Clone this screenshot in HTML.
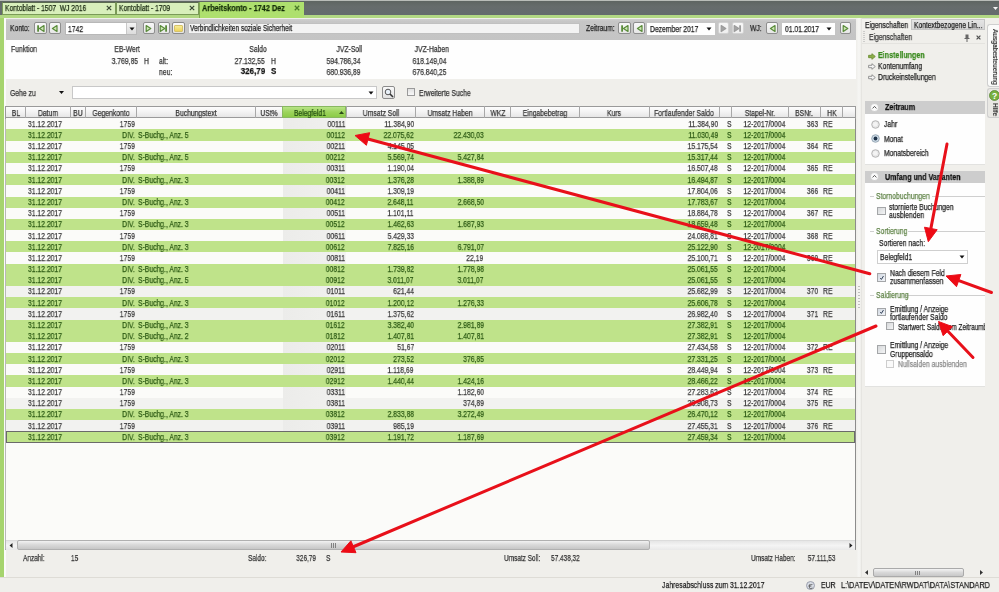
<!DOCTYPE html><html><head><meta charset="utf-8"><style>
*{margin:0;padding:0;box-sizing:border-box}
html,body{width:999px;height:592px;overflow:hidden;background:#f0efeb;font-family:"Liberation Sans",sans-serif;position:relative}
.r{position:absolute}
.t{position:absolute;white-space:nowrap;line-height:12px;transform:scaleX(0.8);transform-origin:0 0;-webkit-text-stroke:0.25px currentColor;will-change:transform}
.tr{transform-origin:100% 0;text-align:right}
.tc{transform-origin:50% 0;text-align:center}
</style></head><body><div style="position:absolute;left:0;top:0;width:999px;height:592px;overflow:hidden;filter:blur(0.3px)">
<div class="r" style="left:0.00px;top:0.00px;width:999.00px;height:1.30px;background:#b9bdb9"></div>
<div class="r" style="left:0.00px;top:1.30px;width:999.00px;height:13.30px;background:linear-gradient(#5e6562,#666c6c 40%,#646b6e)"></div>
<div class="r" style="left:0.00px;top:14.60px;width:999.00px;height:3.60px;background:#b2d884"></div>
<div class="r" style="left:0.00px;top:18.20px;width:999.00px;height:1.00px;background:#f2f8e8"></div>
<svg class="r" style="left:992.5px;top:6.5px" width="5" height="3" viewBox="0 0 5 3"><path d="M0 0 L5 0 L2.5 3Z" fill="#f4f4f4"/></svg>
<div class="r" style="left:1.50px;top:1.60px;width:114.00px;height:13.20px;background:#d8efbb;border:1px solid #7a9a58;border-top-color:#5a6a50"></div>
<div class="t" style="left:4.50px;top:3.37px;font-size:8.18125px;color:#1a2a12;transform:scaleX(0.82);">Kontoblatt - 1507&nbsp; WJ 2016</div>
<svg class="r" style="left:105.80px;top:5.30px" width="6" height="6" viewBox="0 0 6 6"><path d="M0.8 0.8 L5.2 5.2 M5.2 0.8 L0.8 5.2" stroke="#3a4a34" stroke-width="1.2"/></svg>
<div class="r" style="left:116.00px;top:1.60px;width:82.50px;height:13.20px;background:#d8efbb;border:1px solid #7a9a58;border-top-color:#5a6a50"></div>
<div class="t" style="left:119.00px;top:3.37px;font-size:8.18125px;color:#1a2a12;transform:scaleX(0.82);">Kontoblatt - 1709</div>
<svg class="r" style="left:188.80px;top:5.30px" width="6" height="6" viewBox="0 0 6 6"><path d="M0.8 0.8 L5.2 5.2 M5.2 0.8 L0.8 5.2" stroke="#3a4a34" stroke-width="1.2"/></svg>
<div class="r" style="left:198.50px;top:1.60px;width:105.00px;height:16.60px;background:#aee06e;border-left:1px solid #7ea850"></div>
<div class="t" style="left:202.00px;top:2.28px;font-size:8.712499999999999px;color:#142e08;font-weight:bold;transform:scaleX(0.84);">Arbeitskonto - 1742 Dez</div>
<svg class="r" style="left:293.50px;top:5.30px" width="6" height="6" viewBox="0 0 6 6"><path d="M0.8 0.8 L5.2 5.2 M5.2 0.8 L0.8 5.2" stroke="#4a7a2a" stroke-width="1.3"/></svg>
<div class="r" style="left:0.00px;top:18.00px;width:4.00px;height:559.00px;background:#a6d46e"></div>
<div class="r" style="left:4.00px;top:18.20px;width:852.00px;height:558.80px;background:#f0efeb"></div>
<div class="r" style="left:4.00px;top:18.20px;width:1.50px;height:558.80px;background:#fbfbf9"></div>
<div class="r" style="left:5.50px;top:19.20px;width:850.50px;height:21.10px;background:linear-gradient(#cfcfcf,#c6c6c6 12%,#c4c4c4)"></div>
<div class="r" style="left:5.50px;top:40.30px;width:850.50px;height:38.70px;background:#fefefe"></div>
<div class="t" style="left:9.50px;top:22.25px;font-size:8.5px;color:#222;">Konto:</div>
<div class="r" style="left:33.50px;top:22.40px;width:13.00px;height:11.90px;background:linear-gradient(#f8f8f8,#e6e6e6);border:1px solid #8e8e8e;border-radius:2px"></div>
<svg class="r" style="left:35.50px;top:23.85px" width="9" height="9" viewBox="0 0 9 9"><rect x="1.2" y="1.3" width="1.8" height="6.4" fill="#5a8c3a"/><path d="M8 1.5 L3.4 4.5 L8 7.5Z" fill="#cfe6b8" stroke="#5a8c3a" stroke-width="1.2" stroke-linejoin="round"/></svg>
<div class="r" style="left:48.50px;top:22.40px;width:12.80px;height:11.90px;background:linear-gradient(#f8f8f8,#e6e6e6);border:1px solid #8e8e8e;border-radius:2px"></div>
<svg class="r" style="left:50.40px;top:23.85px" width="9" height="9" viewBox="0 0 9 9"><path d="M7 1.5 L2.4 4.5 L7 7.5Z" fill="#cfe6b8" stroke="#5a8c3a" stroke-width="1.2" stroke-linejoin="round"/></svg>
<div class="r" style="left:64.60px;top:22.30px;width:72.90px;height:12.50px;background:#fff;border:1px solid #b8b8b8"></div>
<div class="t" style="left:68.10px;top:22.50px;font-size:8.5px;color:#222;">1742</div>
<div class="r" style="left:126.20px;top:23.30px;width:10.30px;height:10.50px;background:linear-gradient(#f4f4f4,#dcdcdc);border-left:1px solid #c8c8c8"></div>
<svg class="r" style="left:128.5px;top:27px" width="6" height="4" viewBox="0 0 6 4"><path d="M0.5 0.5 L5.5 0.5 L3 3.5Z" fill="#111"/></svg>
<div class="r" style="left:142.50px;top:22.40px;width:12.50px;height:11.90px;background:linear-gradient(#f8f8f8,#e6e6e6);border:1px solid #8e8e8e;border-radius:2px"></div>
<svg class="r" style="left:144.25px;top:23.85px" width="9" height="9" viewBox="0 0 9 9"><path d="M2.2 1.5 L6.8 4.5 L2.2 7.5Z" fill="#cfe6b8" stroke="#5a8c3a" stroke-width="1.2" stroke-linejoin="round"/></svg>
<div class="r" style="left:157.50px;top:22.40px;width:12.50px;height:11.90px;background:linear-gradient(#f8f8f8,#e6e6e6);border:1px solid #8e8e8e;border-radius:2px"></div>
<svg class="r" style="left:159.25px;top:23.85px" width="9" height="9" viewBox="0 0 9 9"><path d="M1.2 1.5 L5.8 4.5 L1.2 7.5Z" fill="#cfe6b8" stroke="#5a8c3a" stroke-width="1.2" stroke-linejoin="round"/><rect x="6.2" y="1.3" width="1.8" height="6.4" fill="#5a8c3a"/></svg>
<div class="r" style="left:172.00px;top:22.30px;width:12.60px;height:12.20px;background:linear-gradient(#fbfbfb,#e4e4e4);border:1px solid #8a8a8a;border-radius:2px"></div>
<div class="r" style="left:174.00px;top:24.60px;width:8.80px;height:7.80px;background:linear-gradient(#f6ec98,#eed45a);border:1px solid #d6c26a;border-radius:1px"></div>
<div class="r" style="left:188.00px;top:22.80px;width:391.80px;height:11.40px;background:#fff;border:1px solid #c0c0c0"></div>
<div class="t" style="left:190.50px;top:22.45px;font-size:8.5px;color:#222;">Verbindlichkeiten soziale Sicherheit</div>
<div class="r" style="left:189.00px;top:23.80px;width:389.80px;height:9.40px;background:#f3f3f3"></div>
<div class="t" style="left:190.00px;top:22.45px;font-size:8.5px;color:#222;transform:scaleX(0.765);">Verbindlichkeiten soziale Sicherheit</div>
<div class="t" style="left:585.80px;top:22.25px;font-size:8.5px;color:#222;">Zeitraum:</div>
<div class="r" style="left:618.30px;top:22.40px;width:12.60px;height:11.90px;background:linear-gradient(#f8f8f8,#e6e6e6);border:1px solid #8e8e8e;border-radius:2px"></div>
<svg class="r" style="left:620.10px;top:23.85px" width="9" height="9" viewBox="0 0 9 9"><rect x="1.2" y="1.3" width="1.8" height="6.4" fill="#5a8c3a"/><path d="M8 1.5 L3.4 4.5 L8 7.5Z" fill="#cfe6b8" stroke="#5a8c3a" stroke-width="1.2" stroke-linejoin="round"/></svg>
<div class="r" style="left:633.30px;top:22.40px;width:12.20px;height:11.90px;background:linear-gradient(#f8f8f8,#e6e6e6);border:1px solid #8e8e8e;border-radius:2px"></div>
<svg class="r" style="left:634.90px;top:23.85px" width="9" height="9" viewBox="0 0 9 9"><path d="M7 1.5 L2.4 4.5 L7 7.5Z" fill="#cfe6b8" stroke="#5a8c3a" stroke-width="1.2" stroke-linejoin="round"/></svg>
<div class="r" style="left:647.10px;top:23.00px;width:68.30px;height:11.80px;background:#fff;border:1px solid #ffffff"></div>
<div class="t" style="left:650.10px;top:22.85px;font-size:8.5px;color:#222;">Dezember 2017</div>
<svg class="r" style="left:706.40px;top:27.40px" width="6" height="4" viewBox="0 0 6 4"><path d="M0.5 0.5 L5.5 0.5 L3 3.5Z" fill="#111"/></svg>
<div class="r" style="left:717.80px;top:22.40px;width:11.40px;height:11.90px;background:linear-gradient(#f7f7f7,#efefef);border:1px solid #d2d2d2;border-radius:2px"></div>
<svg class="r" style="left:719.00px;top:23.85px" width="9" height="9" viewBox="0 0 9 9"><path d="M2.2 1.5 L6.8 4.5 L2.2 7.5Z" fill="#a4a4a4" stroke="#9c9c9c" stroke-width="1.2" stroke-linejoin="round"/></svg>
<div class="r" style="left:731.60px;top:22.40px;width:12.10px;height:11.90px;background:linear-gradient(#f7f7f7,#efefef);border:1px solid #d2d2d2;border-radius:2px"></div>
<svg class="r" style="left:733.15px;top:23.85px" width="9" height="9" viewBox="0 0 9 9"><path d="M1.2 1.5 L5.8 4.5 L1.2 7.5Z" fill="#a4a4a4" stroke="#9c9c9c" stroke-width="1.2" stroke-linejoin="round"/><rect x="6.2" y="1.3" width="1.8" height="6.4" fill="#9c9c9c"/></svg>
<div class="t" style="left:750.30px;top:22.25px;font-size:8.5px;color:#222;">WJ:</div>
<div class="r" style="left:765.90px;top:22.40px;width:12.60px;height:11.90px;background:linear-gradient(#f8f8f8,#e6e6e6);border:1px solid #8e8e8e;border-radius:2px"></div>
<svg class="r" style="left:767.70px;top:23.85px" width="9" height="9" viewBox="0 0 9 9"><path d="M7 1.5 L2.4 4.5 L7 7.5Z" fill="#cfe6b8" stroke="#5a8c3a" stroke-width="1.2" stroke-linejoin="round"/></svg>
<div class="r" style="left:782.00px;top:22.80px;width:53.00px;height:11.80px;background:#fff;border:1px solid #ffffff"></div>
<div class="t" style="left:784.80px;top:22.65px;font-size:8.5px;color:#222;">01.01.2017</div>
<svg class="r" style="left:826.00px;top:27.20px" width="6" height="4" viewBox="0 0 6 4"><path d="M0.5 0.5 L5.5 0.5 L3 3.5Z" fill="#111"/></svg>
<div class="r" style="left:839.60px;top:22.40px;width:11.40px;height:11.90px;background:linear-gradient(#f8f8f8,#e6e6e6);border:1px solid #8e8e8e;border-radius:2px"></div>
<svg class="r" style="left:840.80px;top:23.85px" width="9" height="9" viewBox="0 0 9 9"><path d="M2.2 1.5 L6.8 4.5 L2.2 7.5Z" fill="#cfe6b8" stroke="#5a8c3a" stroke-width="1.2" stroke-linejoin="round"/></svg>
<div class="t" style="left:10.50px;top:42.65px;font-size:8.5px;color:#333;">Funktion</div>
<div class="t tr" style="right:859.40px;top:42.65px;font-size:8.5px;color:#333;">EB-Wert</div>
<div class="t tr" style="right:861.20px;top:54.95px;font-size:8.5px;color:#333;">3.769,85</div>
<div class="t" style="left:144.40px;top:54.95px;font-size:8.5px;color:#333;">H</div>
<div class="t" style="left:158.80px;top:54.95px;font-size:8.5px;color:#333;">alt:</div>
<div class="t" style="left:158.80px;top:65.85px;font-size:8.5px;color:#333;">neu:</div>
<div class="t tr" style="right:732.10px;top:42.65px;font-size:8.5px;color:#333;">Saldo</div>
<div class="t tr" style="right:734.10px;top:54.95px;font-size:8.5px;color:#333;">27.132,55</div>
<div class="t" style="left:270.60px;top:54.95px;font-size:8.5px;color:#333;">H</div>
<div class="t tr" style="right:734.10px;top:65.49px;font-size:9.5625px;color:#111;font-weight:bold;transform:scaleX(0.84);">326,79</div>
<div class="t" style="left:270.60px;top:65.49px;font-size:9.5625px;color:#111;font-weight:bold;transform:scaleX(0.84);">S</div>
<div class="t tr" style="right:636.70px;top:42.65px;font-size:8.5px;color:#333;">JVZ-Soll</div>
<div class="t tr" style="right:638.90px;top:54.95px;font-size:8.5px;color:#333;">594.786,34</div>
<div class="t tr" style="right:638.90px;top:65.85px;font-size:8.5px;color:#333;">680.936,89</div>
<div class="t tr" style="right:549.90px;top:42.65px;font-size:8.5px;color:#333;">JVZ-Haben</div>
<div class="t tr" style="right:552.10px;top:54.95px;font-size:8.5px;color:#333;">618.149,04</div>
<div class="t tr" style="right:552.10px;top:65.85px;font-size:8.5px;color:#333;">676.840,25</div>
<div class="t" style="left:9.60px;top:87.05px;font-size:8.5px;color:#333;">Gehe zu</div>
<svg class="r" style="left:58.5px;top:91.3px" width="5" height="3" viewBox="0 0 5 3"><path d="M0 0 L5 0 L2.5 3Z" fill="#111"/></svg>
<div class="r" style="left:72.00px;top:85.80px;width:305.20px;height:12.80px;background:#fff;border:1px solid #c8c8c8"></div>
<svg class="r" style="left:368.20px;top:90.70px" width="6" height="4" viewBox="0 0 6 4"><path d="M0.5 0.5 L5.5 0.5 L3 3.5Z" fill="#111"/></svg>
<div class="r" style="left:382.00px;top:86.00px;width:13.30px;height:12.80px;background:linear-gradient(#fafafa,#e2e2e2);border:1px solid #8c8c8c;border-radius:2px"></div>
<svg class="r" style="left:384px;top:88px" width="10" height="10" viewBox="0 0 10 10"><circle cx="4" cy="4" r="2.8" fill="#e8f0f8" stroke="#555" stroke-width="1"/><path d="M6 6 L9 9" stroke="#333" stroke-width="1.6"/></svg>
<div class="r" style="left:407.30px;top:88.40px;width:8.00px;height:8.00px;background:linear-gradient(#e0e0e0,#f8f8f8);border:1px solid #9a9a9a"></div>
<div class="t" style="left:418.50px;top:87.05px;font-size:8.5px;color:#333;">Erweiterte Suche</div>
<div class="r" style="left:5.30px;top:106.00px;width:850.70px;height:444.40px;background:#fbfbf9;border:1px solid #b8b8b8;border-right-color:#8c8c8c;border-bottom-color:#a0a0a0"></div>
<div class="r" style="left:5.30px;top:106.00px;width:850.70px;height:12.30px;background:linear-gradient(#fdfdfd,#f3f3f3 50%,#e6e6e6);border:1px solid #9a9a9a"></div>
<div class="t tc" style="left:-84.40px;width:200px;top:106.85px;font-size:8.5px;color:#333;">BL</div>
<div class="r" style="left:25.00px;top:106.00px;width:1.00px;height:12.30px;background:#a8a8a8"></div>
<div class="t tc" style="left:-51.95px;width:200px;top:106.85px;font-size:8.5px;color:#333;">Datum</div>
<div class="r" style="left:70.10px;top:106.00px;width:1.00px;height:12.30px;background:#a8a8a8"></div>
<div class="t tc" style="left:-22.05px;width:200px;top:106.85px;font-size:8.5px;color:#333;">BU</div>
<div class="r" style="left:84.80px;top:106.00px;width:1.00px;height:12.30px;background:#a8a8a8"></div>
<div class="t tc" style="left:10.90px;width:200px;top:106.85px;font-size:8.5px;color:#333;">Gegenkonto</div>
<div class="r" style="left:136.00px;top:106.00px;width:1.00px;height:12.30px;background:#a8a8a8"></div>
<div class="t tc" style="left:96.00px;width:200px;top:106.85px;font-size:8.5px;color:#333;">Buchungstext</div>
<div class="r" style="left:255.00px;top:106.00px;width:1.00px;height:12.30px;background:#a8a8a8"></div>
<div class="t tc" style="left:168.90px;width:200px;top:106.85px;font-size:8.5px;color:#333;">USt%</div>
<div class="r" style="left:282.30px;top:106.00px;width:63.80px;height:12.30px;background:linear-gradient(#b8e486,#9cd45c 50%,#8ccb48);border:1px solid #88b860"></div>
<div class="t tc" style="left:210.20px;width:200px;top:106.85px;font-size:8.5px;color:#1f4a10;-webkit-text-stroke:0.2px #1f4a10;">Belegfeld1</div>
<svg class="r" style="left:338.5px;top:110.8px" width="5" height="3" viewBox="0 0 5 3"><path d="M0 3 L5 3 L2.5 0Z" fill="#2a4a18"/></svg>
<div class="r" style="left:345.60px;top:106.00px;width:1.00px;height:12.30px;background:#a8a8a8"></div>
<div class="t tc" style="left:280.70px;width:200px;top:106.85px;font-size:8.5px;color:#333;">Umsatz Soll</div>
<div class="r" style="left:414.80px;top:106.00px;width:1.00px;height:12.30px;background:#a8a8a8"></div>
<div class="t tc" style="left:350.00px;width:200px;top:106.85px;font-size:8.5px;color:#333;">Umsatz Haben</div>
<div class="r" style="left:484.20px;top:106.00px;width:1.00px;height:12.30px;background:#a8a8a8"></div>
<div class="t tc" style="left:397.55px;width:200px;top:106.85px;font-size:8.5px;color:#333;">WKZ</div>
<div class="r" style="left:509.90px;top:106.00px;width:1.00px;height:12.30px;background:#a8a8a8"></div>
<div class="t tc" style="left:444.85px;width:200px;top:106.85px;font-size:8.5px;color:#333;">Eingabebetrag</div>
<div class="r" style="left:578.80px;top:106.00px;width:1.00px;height:12.30px;background:#a8a8a8"></div>
<div class="t tc" style="left:514.45px;width:200px;top:106.85px;font-size:8.5px;color:#333;">Kurs</div>
<div class="r" style="left:649.10px;top:106.00px;width:1.00px;height:12.30px;background:#a8a8a8"></div>
<div class="t tc" style="left:584.45px;width:200px;top:106.85px;font-size:8.5px;color:#333;">Fortlaufender Saldo</div>
<div class="r" style="left:718.80px;top:106.00px;width:1.00px;height:12.30px;background:#a8a8a8"></div>
<div class="r" style="left:731.00px;top:106.00px;width:1.00px;height:12.30px;background:#a8a8a8"></div>
<div class="t tc" style="left:659.80px;width:200px;top:106.85px;font-size:8.5px;color:#333;">Stapel-Nr.</div>
<div class="r" style="left:787.60px;top:106.00px;width:1.00px;height:12.30px;background:#a8a8a8"></div>
<div class="t tc" style="left:704.40px;width:200px;top:106.85px;font-size:8.5px;color:#333;">BSNr.</div>
<div class="r" style="left:820.20px;top:106.00px;width:1.00px;height:12.30px;background:#a8a8a8"></div>
<div class="t tc" style="left:731.65px;width:200px;top:106.85px;font-size:8.5px;color:#333;">HK</div>
<div class="r" style="left:842.10px;top:106.00px;width:1.00px;height:12.30px;background:#a8a8a8"></div>
<div class="r" style="left:5.30px;top:117.70px;width:850.70px;height:1.00px;background:#9a9a9a"></div>
<div class="r" style="left:5.80px;top:118.30px;width:849.70px;height:11.18px;background:#fbfbf9"></div>
<div class="r" style="left:282.50px;top:118.30px;width:63.50px;height:11.18px;background:linear-gradient(90deg,#ececea,#efefed 60%,#f3f3f1)"></div>
<div class="t" style="left:27.80px;top:117.75px;font-size:8.5px;color:#3a3a3a;">31.12.2017</div>
<div class="t tr" style="right:863.80px;top:117.75px;font-size:8.5px;color:#3a3a3a;">1759</div>
<div class="t tr" style="right:654.00px;top:117.75px;font-size:8.5px;color:#3a3a3a;">00111</div>
<div class="t tr" style="right:585.20px;top:117.75px;font-size:8.5px;color:#3a3a3a;">11.384,90</div>
<div class="t tr" style="right:281.20px;top:117.75px;font-size:8.5px;color:#3a3a3a;">11.384,90</div>
<div class="t" style="left:726.50px;top:117.75px;font-size:8.5px;color:#3a3a3a;">S</div>
<div class="t tr" style="right:213.20px;top:117.75px;font-size:8.5px;color:#3a3a3a;">12-2017/0004</div>
<div class="t tr" style="right:180.80px;top:117.75px;font-size:8.5px;color:#3a3a3a;">363</div>
<div class="t" style="left:822.50px;top:117.75px;font-size:8.5px;color:#3a3a3a;">RE</div>
<div class="r" style="left:5.80px;top:129.48px;width:849.70px;height:11.18px;background:#bfe38a"></div>
<div class="t" style="left:27.80px;top:128.93px;font-size:8.5px;color:#2c5a14;">31.12.2017</div>
<div class="t tr" style="right:863.80px;top:128.93px;font-size:8.5px;color:#2c5a14;">DIV.</div>
<div class="t" style="left:138.30px;top:128.93px;font-size:8.5px;color:#2c5a14;">S-Buchg., Anz. 5</div>
<div class="t tr" style="right:654.00px;top:128.93px;font-size:8.5px;color:#2c5a14;">00112</div>
<div class="t tr" style="right:585.20px;top:128.93px;font-size:8.5px;color:#2c5a14;">22.075,62</div>
<div class="t tr" style="right:515.30px;top:128.93px;font-size:8.5px;color:#2c5a14;">22.430,03</div>
<div class="t tr" style="right:281.20px;top:128.93px;font-size:8.5px;color:#2c5a14;">11.030,49</div>
<div class="t" style="left:726.50px;top:128.93px;font-size:8.5px;color:#2c5a14;">S</div>
<div class="t tr" style="right:213.20px;top:128.93px;font-size:8.5px;color:#2c5a14;">12-2017/0004</div>
<div class="r" style="left:5.80px;top:140.66px;width:849.70px;height:11.18px;background:#fbfbf9"></div>
<div class="r" style="left:282.50px;top:140.66px;width:63.50px;height:11.18px;background:linear-gradient(90deg,#ececea,#efefed 60%,#f3f3f1)"></div>
<div class="t" style="left:27.80px;top:140.11px;font-size:8.5px;color:#3a3a3a;">31.12.2017</div>
<div class="t tr" style="right:863.80px;top:140.11px;font-size:8.5px;color:#3a3a3a;">1759</div>
<div class="t tr" style="right:654.00px;top:140.11px;font-size:8.5px;color:#3a3a3a;">00211</div>
<div class="t tr" style="right:585.20px;top:140.11px;font-size:8.5px;color:#3a3a3a;">4.145,05</div>
<div class="t tr" style="right:281.20px;top:140.11px;font-size:8.5px;color:#3a3a3a;">15.175,54</div>
<div class="t" style="left:726.50px;top:140.11px;font-size:8.5px;color:#3a3a3a;">S</div>
<div class="t tr" style="right:213.20px;top:140.11px;font-size:8.5px;color:#3a3a3a;">12-2017/0004</div>
<div class="t tr" style="right:180.80px;top:140.11px;font-size:8.5px;color:#3a3a3a;">364</div>
<div class="t" style="left:822.50px;top:140.11px;font-size:8.5px;color:#3a3a3a;">RE</div>
<div class="r" style="left:5.80px;top:151.84px;width:849.70px;height:11.18px;background:#bfe38a"></div>
<div class="t" style="left:27.80px;top:151.29px;font-size:8.5px;color:#2c5a14;">31.12.2017</div>
<div class="t tr" style="right:863.80px;top:151.29px;font-size:8.5px;color:#2c5a14;">DIV.</div>
<div class="t" style="left:138.30px;top:151.29px;font-size:8.5px;color:#2c5a14;">S-Buchg., Anz. 5</div>
<div class="t tr" style="right:654.00px;top:151.29px;font-size:8.5px;color:#2c5a14;">00212</div>
<div class="t tr" style="right:585.20px;top:151.29px;font-size:8.5px;color:#2c5a14;">5.569,74</div>
<div class="t tr" style="right:515.30px;top:151.29px;font-size:8.5px;color:#2c5a14;">5.427,84</div>
<div class="t tr" style="right:281.20px;top:151.29px;font-size:8.5px;color:#2c5a14;">15.317,44</div>
<div class="t" style="left:726.50px;top:151.29px;font-size:8.5px;color:#2c5a14;">S</div>
<div class="t tr" style="right:213.20px;top:151.29px;font-size:8.5px;color:#2c5a14;">12-2017/0004</div>
<div class="r" style="left:5.80px;top:163.02px;width:849.70px;height:11.18px;background:#fbfbf9"></div>
<div class="r" style="left:282.50px;top:163.02px;width:63.50px;height:11.18px;background:linear-gradient(90deg,#ececea,#efefed 60%,#f3f3f1)"></div>
<div class="t" style="left:27.80px;top:162.47px;font-size:8.5px;color:#3a3a3a;">31.12.2017</div>
<div class="t tr" style="right:863.80px;top:162.47px;font-size:8.5px;color:#3a3a3a;">1759</div>
<div class="t tr" style="right:654.00px;top:162.47px;font-size:8.5px;color:#3a3a3a;">00311</div>
<div class="t tr" style="right:585.20px;top:162.47px;font-size:8.5px;color:#3a3a3a;">1.190,04</div>
<div class="t tr" style="right:281.20px;top:162.47px;font-size:8.5px;color:#3a3a3a;">16.507,48</div>
<div class="t" style="left:726.50px;top:162.47px;font-size:8.5px;color:#3a3a3a;">S</div>
<div class="t tr" style="right:213.20px;top:162.47px;font-size:8.5px;color:#3a3a3a;">12-2017/0004</div>
<div class="t tr" style="right:180.80px;top:162.47px;font-size:8.5px;color:#3a3a3a;">365</div>
<div class="t" style="left:822.50px;top:162.47px;font-size:8.5px;color:#3a3a3a;">RE</div>
<div class="r" style="left:5.80px;top:174.20px;width:849.70px;height:11.18px;background:#bfe38a"></div>
<div class="t" style="left:27.80px;top:173.65px;font-size:8.5px;color:#2c5a14;">31.12.2017</div>
<div class="t tr" style="right:863.80px;top:173.65px;font-size:8.5px;color:#2c5a14;">DIV.</div>
<div class="t" style="left:138.30px;top:173.65px;font-size:8.5px;color:#2c5a14;">S-Buchg., Anz. 3</div>
<div class="t tr" style="right:654.00px;top:173.65px;font-size:8.5px;color:#2c5a14;">00312</div>
<div class="t tr" style="right:585.20px;top:173.65px;font-size:8.5px;color:#2c5a14;">1.376,28</div>
<div class="t tr" style="right:515.30px;top:173.65px;font-size:8.5px;color:#2c5a14;">1.388,89</div>
<div class="t tr" style="right:281.20px;top:173.65px;font-size:8.5px;color:#2c5a14;">16.494,87</div>
<div class="t" style="left:726.50px;top:173.65px;font-size:8.5px;color:#2c5a14;">S</div>
<div class="t tr" style="right:213.20px;top:173.65px;font-size:8.5px;color:#2c5a14;">12-2017/0004</div>
<div class="r" style="left:5.80px;top:185.38px;width:849.70px;height:11.18px;background:#fbfbf9"></div>
<div class="r" style="left:282.50px;top:185.38px;width:63.50px;height:11.18px;background:linear-gradient(90deg,#ececea,#efefed 60%,#f3f3f1)"></div>
<div class="t" style="left:27.80px;top:184.83px;font-size:8.5px;color:#3a3a3a;">31.12.2017</div>
<div class="t tr" style="right:863.80px;top:184.83px;font-size:8.5px;color:#3a3a3a;">1759</div>
<div class="t tr" style="right:654.00px;top:184.83px;font-size:8.5px;color:#3a3a3a;">00411</div>
<div class="t tr" style="right:585.20px;top:184.83px;font-size:8.5px;color:#3a3a3a;">1.309,19</div>
<div class="t tr" style="right:281.20px;top:184.83px;font-size:8.5px;color:#3a3a3a;">17.804,06</div>
<div class="t" style="left:726.50px;top:184.83px;font-size:8.5px;color:#3a3a3a;">S</div>
<div class="t tr" style="right:213.20px;top:184.83px;font-size:8.5px;color:#3a3a3a;">12-2017/0004</div>
<div class="t tr" style="right:180.80px;top:184.83px;font-size:8.5px;color:#3a3a3a;">366</div>
<div class="t" style="left:822.50px;top:184.83px;font-size:8.5px;color:#3a3a3a;">RE</div>
<div class="r" style="left:5.80px;top:196.56px;width:849.70px;height:11.18px;background:#bfe38a"></div>
<div class="t" style="left:27.80px;top:196.01px;font-size:8.5px;color:#2c5a14;">31.12.2017</div>
<div class="t tr" style="right:863.80px;top:196.01px;font-size:8.5px;color:#2c5a14;">DIV.</div>
<div class="t" style="left:138.30px;top:196.01px;font-size:8.5px;color:#2c5a14;">S-Buchg., Anz. 3</div>
<div class="t tr" style="right:654.00px;top:196.01px;font-size:8.5px;color:#2c5a14;">00412</div>
<div class="t tr" style="right:585.20px;top:196.01px;font-size:8.5px;color:#2c5a14;">2.648,11</div>
<div class="t tr" style="right:515.30px;top:196.01px;font-size:8.5px;color:#2c5a14;">2.668,50</div>
<div class="t tr" style="right:281.20px;top:196.01px;font-size:8.5px;color:#2c5a14;">17.783,67</div>
<div class="t" style="left:726.50px;top:196.01px;font-size:8.5px;color:#2c5a14;">S</div>
<div class="t tr" style="right:213.20px;top:196.01px;font-size:8.5px;color:#2c5a14;">12-2017/0004</div>
<div class="r" style="left:5.80px;top:207.74px;width:849.70px;height:11.18px;background:#fbfbf9"></div>
<div class="r" style="left:282.50px;top:207.74px;width:63.50px;height:11.18px;background:linear-gradient(90deg,#ececea,#efefed 60%,#f3f3f1)"></div>
<div class="t" style="left:27.80px;top:207.19px;font-size:8.5px;color:#3a3a3a;">31.12.2017</div>
<div class="t tr" style="right:863.80px;top:207.19px;font-size:8.5px;color:#3a3a3a;">1759</div>
<div class="t tr" style="right:654.00px;top:207.19px;font-size:8.5px;color:#3a3a3a;">00511</div>
<div class="t tr" style="right:585.20px;top:207.19px;font-size:8.5px;color:#3a3a3a;">1.101,11</div>
<div class="t tr" style="right:281.20px;top:207.19px;font-size:8.5px;color:#3a3a3a;">18.884,78</div>
<div class="t" style="left:726.50px;top:207.19px;font-size:8.5px;color:#3a3a3a;">S</div>
<div class="t tr" style="right:213.20px;top:207.19px;font-size:8.5px;color:#3a3a3a;">12-2017/0004</div>
<div class="t tr" style="right:180.80px;top:207.19px;font-size:8.5px;color:#3a3a3a;">367</div>
<div class="t" style="left:822.50px;top:207.19px;font-size:8.5px;color:#3a3a3a;">RE</div>
<div class="r" style="left:5.80px;top:218.92px;width:849.70px;height:11.18px;background:#bfe38a"></div>
<div class="t" style="left:27.80px;top:218.37px;font-size:8.5px;color:#2c5a14;">31.12.2017</div>
<div class="t tr" style="right:863.80px;top:218.37px;font-size:8.5px;color:#2c5a14;">DIV.</div>
<div class="t" style="left:138.30px;top:218.37px;font-size:8.5px;color:#2c5a14;">S-Buchg., Anz. 3</div>
<div class="t tr" style="right:654.00px;top:218.37px;font-size:8.5px;color:#2c5a14;">00512</div>
<div class="t tr" style="right:585.20px;top:218.37px;font-size:8.5px;color:#2c5a14;">1.462,63</div>
<div class="t tr" style="right:515.30px;top:218.37px;font-size:8.5px;color:#2c5a14;">1.687,93</div>
<div class="t tr" style="right:281.20px;top:218.37px;font-size:8.5px;color:#2c5a14;">18.659,48</div>
<div class="t" style="left:726.50px;top:218.37px;font-size:8.5px;color:#2c5a14;">S</div>
<div class="t tr" style="right:213.20px;top:218.37px;font-size:8.5px;color:#2c5a14;">12-2017/0004</div>
<div class="r" style="left:5.80px;top:230.10px;width:849.70px;height:11.18px;background:#fbfbf9"></div>
<div class="r" style="left:282.50px;top:230.10px;width:63.50px;height:11.18px;background:linear-gradient(90deg,#ececea,#efefed 60%,#f3f3f1)"></div>
<div class="t" style="left:27.80px;top:229.55px;font-size:8.5px;color:#3a3a3a;">31.12.2017</div>
<div class="t tr" style="right:863.80px;top:229.55px;font-size:8.5px;color:#3a3a3a;">1759</div>
<div class="t tr" style="right:654.00px;top:229.55px;font-size:8.5px;color:#3a3a3a;">00611</div>
<div class="t tr" style="right:585.20px;top:229.55px;font-size:8.5px;color:#3a3a3a;">5.429,33</div>
<div class="t tr" style="right:281.20px;top:229.55px;font-size:8.5px;color:#3a3a3a;">24.088,81</div>
<div class="t" style="left:726.50px;top:229.55px;font-size:8.5px;color:#3a3a3a;">S</div>
<div class="t tr" style="right:213.20px;top:229.55px;font-size:8.5px;color:#3a3a3a;">12-2017/0004</div>
<div class="t tr" style="right:180.80px;top:229.55px;font-size:8.5px;color:#3a3a3a;">368</div>
<div class="t" style="left:822.50px;top:229.55px;font-size:8.5px;color:#3a3a3a;">RE</div>
<div class="r" style="left:5.80px;top:241.28px;width:849.70px;height:11.18px;background:#bfe38a"></div>
<div class="t" style="left:27.80px;top:240.73px;font-size:8.5px;color:#2c5a14;">31.12.2017</div>
<div class="t tr" style="right:863.80px;top:240.73px;font-size:8.5px;color:#2c5a14;">DIV.</div>
<div class="t" style="left:138.30px;top:240.73px;font-size:8.5px;color:#2c5a14;">S-Buchg., Anz. 3</div>
<div class="t tr" style="right:654.00px;top:240.73px;font-size:8.5px;color:#2c5a14;">00612</div>
<div class="t tr" style="right:585.20px;top:240.73px;font-size:8.5px;color:#2c5a14;">7.825,16</div>
<div class="t tr" style="right:515.30px;top:240.73px;font-size:8.5px;color:#2c5a14;">6.791,07</div>
<div class="t tr" style="right:281.20px;top:240.73px;font-size:8.5px;color:#2c5a14;">25.122,90</div>
<div class="t" style="left:726.50px;top:240.73px;font-size:8.5px;color:#2c5a14;">S</div>
<div class="t tr" style="right:213.20px;top:240.73px;font-size:8.5px;color:#2c5a14;">12-2017/0004</div>
<div class="r" style="left:5.80px;top:252.46px;width:849.70px;height:11.18px;background:#fbfbf9"></div>
<div class="r" style="left:282.50px;top:252.46px;width:63.50px;height:11.18px;background:linear-gradient(90deg,#ececea,#efefed 60%,#f3f3f1)"></div>
<div class="t" style="left:27.80px;top:251.91px;font-size:8.5px;color:#3a3a3a;">31.12.2017</div>
<div class="t tr" style="right:863.80px;top:251.91px;font-size:8.5px;color:#3a3a3a;">1759</div>
<div class="t tr" style="right:654.00px;top:251.91px;font-size:8.5px;color:#3a3a3a;">00811</div>
<div class="t tr" style="right:515.30px;top:251.91px;font-size:8.5px;color:#3a3a3a;">22,19</div>
<div class="t tr" style="right:281.20px;top:251.91px;font-size:8.5px;color:#3a3a3a;">25.100,71</div>
<div class="t" style="left:726.50px;top:251.91px;font-size:8.5px;color:#3a3a3a;">S</div>
<div class="t tr" style="right:213.20px;top:251.91px;font-size:8.5px;color:#3a3a3a;">12-2017/0004</div>
<div class="t tr" style="right:180.80px;top:251.91px;font-size:8.5px;color:#3a3a3a;">369</div>
<div class="t" style="left:822.50px;top:251.91px;font-size:8.5px;color:#3a3a3a;">RE</div>
<div class="r" style="left:5.80px;top:263.64px;width:849.70px;height:11.18px;background:#bfe38a"></div>
<div class="t" style="left:27.80px;top:263.09px;font-size:8.5px;color:#2c5a14;">31.12.2017</div>
<div class="t tr" style="right:863.80px;top:263.09px;font-size:8.5px;color:#2c5a14;">DIV.</div>
<div class="t" style="left:138.30px;top:263.09px;font-size:8.5px;color:#2c5a14;">S-Buchg., Anz. 3</div>
<div class="t tr" style="right:654.00px;top:263.09px;font-size:8.5px;color:#2c5a14;">00812</div>
<div class="t tr" style="right:585.20px;top:263.09px;font-size:8.5px;color:#2c5a14;">1.739,82</div>
<div class="t tr" style="right:515.30px;top:263.09px;font-size:8.5px;color:#2c5a14;">1.778,98</div>
<div class="t tr" style="right:281.20px;top:263.09px;font-size:8.5px;color:#2c5a14;">25.061,55</div>
<div class="t" style="left:726.50px;top:263.09px;font-size:8.5px;color:#2c5a14;">S</div>
<div class="t tr" style="right:213.20px;top:263.09px;font-size:8.5px;color:#2c5a14;">12-2017/0004</div>
<div class="r" style="left:5.80px;top:274.82px;width:849.70px;height:11.18px;background:#bfe38a"></div>
<div class="t" style="left:27.80px;top:274.27px;font-size:8.5px;color:#2c5a14;">31.12.2017</div>
<div class="t tr" style="right:863.80px;top:274.27px;font-size:8.5px;color:#2c5a14;">DIV.</div>
<div class="t" style="left:138.30px;top:274.27px;font-size:8.5px;color:#2c5a14;">S-Buchg., Anz. 5</div>
<div class="t tr" style="right:654.00px;top:274.27px;font-size:8.5px;color:#2c5a14;">00912</div>
<div class="t tr" style="right:585.20px;top:274.27px;font-size:8.5px;color:#2c5a14;">3.011,07</div>
<div class="t tr" style="right:515.30px;top:274.27px;font-size:8.5px;color:#2c5a14;">3.011,07</div>
<div class="t tr" style="right:281.20px;top:274.27px;font-size:8.5px;color:#2c5a14;">25.061,55</div>
<div class="t" style="left:726.50px;top:274.27px;font-size:8.5px;color:#2c5a14;">S</div>
<div class="t tr" style="right:213.20px;top:274.27px;font-size:8.5px;color:#2c5a14;">12-2017/0004</div>
<div class="r" style="left:5.80px;top:286.00px;width:849.70px;height:11.18px;background:#f2f2f0"></div>
<div class="r" style="left:282.50px;top:286.00px;width:63.50px;height:11.18px;background:linear-gradient(90deg,#ececea,#efefed 60%,#f3f3f1)"></div>
<div class="t" style="left:27.80px;top:285.45px;font-size:8.5px;color:#3a3a3a;">31.12.2017</div>
<div class="t tr" style="right:863.80px;top:285.45px;font-size:8.5px;color:#3a3a3a;">1759</div>
<div class="t tr" style="right:654.00px;top:285.45px;font-size:8.5px;color:#3a3a3a;">01011</div>
<div class="t tr" style="right:585.20px;top:285.45px;font-size:8.5px;color:#3a3a3a;">621,44</div>
<div class="t tr" style="right:281.20px;top:285.45px;font-size:8.5px;color:#3a3a3a;">25.682,99</div>
<div class="t" style="left:726.50px;top:285.45px;font-size:8.5px;color:#3a3a3a;">S</div>
<div class="t tr" style="right:213.20px;top:285.45px;font-size:8.5px;color:#3a3a3a;">12-2017/0004</div>
<div class="t tr" style="right:180.80px;top:285.45px;font-size:8.5px;color:#3a3a3a;">370</div>
<div class="t" style="left:822.50px;top:285.45px;font-size:8.5px;color:#3a3a3a;">RE</div>
<div class="r" style="left:5.80px;top:297.18px;width:849.70px;height:11.18px;background:#bfe38a"></div>
<div class="t" style="left:27.80px;top:296.63px;font-size:8.5px;color:#2c5a14;">31.12.2017</div>
<div class="t tr" style="right:863.80px;top:296.63px;font-size:8.5px;color:#2c5a14;">DIV.</div>
<div class="t" style="left:138.30px;top:296.63px;font-size:8.5px;color:#2c5a14;">S-Buchg., Anz. 3</div>
<div class="t tr" style="right:654.00px;top:296.63px;font-size:8.5px;color:#2c5a14;">01012</div>
<div class="t tr" style="right:585.20px;top:296.63px;font-size:8.5px;color:#2c5a14;">1.200,12</div>
<div class="t tr" style="right:515.30px;top:296.63px;font-size:8.5px;color:#2c5a14;">1.276,33</div>
<div class="t tr" style="right:281.20px;top:296.63px;font-size:8.5px;color:#2c5a14;">25.606,78</div>
<div class="t" style="left:726.50px;top:296.63px;font-size:8.5px;color:#2c5a14;">S</div>
<div class="t tr" style="right:213.20px;top:296.63px;font-size:8.5px;color:#2c5a14;">12-2017/0004</div>
<div class="r" style="left:5.80px;top:308.36px;width:849.70px;height:11.18px;background:#f2f2f0"></div>
<div class="r" style="left:282.50px;top:308.36px;width:63.50px;height:11.18px;background:linear-gradient(90deg,#ececea,#efefed 60%,#f3f3f1)"></div>
<div class="t" style="left:27.80px;top:307.81px;font-size:8.5px;color:#3a3a3a;">31.12.2017</div>
<div class="t tr" style="right:863.80px;top:307.81px;font-size:8.5px;color:#3a3a3a;">1759</div>
<div class="t tr" style="right:654.00px;top:307.81px;font-size:8.5px;color:#3a3a3a;">01611</div>
<div class="t tr" style="right:585.20px;top:307.81px;font-size:8.5px;color:#3a3a3a;">1.375,62</div>
<div class="t tr" style="right:281.20px;top:307.81px;font-size:8.5px;color:#3a3a3a;">26.982,40</div>
<div class="t" style="left:726.50px;top:307.81px;font-size:8.5px;color:#3a3a3a;">S</div>
<div class="t tr" style="right:213.20px;top:307.81px;font-size:8.5px;color:#3a3a3a;">12-2017/0004</div>
<div class="t tr" style="right:180.80px;top:307.81px;font-size:8.5px;color:#3a3a3a;">371</div>
<div class="t" style="left:822.50px;top:307.81px;font-size:8.5px;color:#3a3a3a;">RE</div>
<div class="r" style="left:5.80px;top:319.54px;width:849.70px;height:11.18px;background:#bfe38a"></div>
<div class="t" style="left:27.80px;top:318.99px;font-size:8.5px;color:#2c5a14;">31.12.2017</div>
<div class="t tr" style="right:863.80px;top:318.99px;font-size:8.5px;color:#2c5a14;">DIV.</div>
<div class="t" style="left:138.30px;top:318.99px;font-size:8.5px;color:#2c5a14;">S-Buchg., Anz. 3</div>
<div class="t tr" style="right:654.00px;top:318.99px;font-size:8.5px;color:#2c5a14;">01612</div>
<div class="t tr" style="right:585.20px;top:318.99px;font-size:8.5px;color:#2c5a14;">3.382,40</div>
<div class="t tr" style="right:515.30px;top:318.99px;font-size:8.5px;color:#2c5a14;">2.981,89</div>
<div class="t tr" style="right:281.20px;top:318.99px;font-size:8.5px;color:#2c5a14;">27.382,91</div>
<div class="t" style="left:726.50px;top:318.99px;font-size:8.5px;color:#2c5a14;">S</div>
<div class="t tr" style="right:213.20px;top:318.99px;font-size:8.5px;color:#2c5a14;">12-2017/0004</div>
<div class="r" style="left:5.80px;top:330.72px;width:849.70px;height:11.18px;background:#bfe38a"></div>
<div class="t" style="left:27.80px;top:330.17px;font-size:8.5px;color:#2c5a14;">31.12.2017</div>
<div class="t tr" style="right:863.80px;top:330.17px;font-size:8.5px;color:#2c5a14;">DIV.</div>
<div class="t" style="left:138.30px;top:330.17px;font-size:8.5px;color:#2c5a14;">S-Buchg., Anz. 2</div>
<div class="t tr" style="right:654.00px;top:330.17px;font-size:8.5px;color:#2c5a14;">01812</div>
<div class="t tr" style="right:585.20px;top:330.17px;font-size:8.5px;color:#2c5a14;">1.407,81</div>
<div class="t tr" style="right:515.30px;top:330.17px;font-size:8.5px;color:#2c5a14;">1.407,81</div>
<div class="t tr" style="right:281.20px;top:330.17px;font-size:8.5px;color:#2c5a14;">27.382,91</div>
<div class="t" style="left:726.50px;top:330.17px;font-size:8.5px;color:#2c5a14;">S</div>
<div class="t tr" style="right:213.20px;top:330.17px;font-size:8.5px;color:#2c5a14;">12-2017/0004</div>
<div class="r" style="left:5.80px;top:341.90px;width:849.70px;height:11.18px;background:#fbfbf9"></div>
<div class="r" style="left:282.50px;top:341.90px;width:63.50px;height:11.18px;background:linear-gradient(90deg,#ececea,#efefed 60%,#f3f3f1)"></div>
<div class="t" style="left:27.80px;top:341.35px;font-size:8.5px;color:#3a3a3a;">31.12.2017</div>
<div class="t tr" style="right:863.80px;top:341.35px;font-size:8.5px;color:#3a3a3a;">1759</div>
<div class="t tr" style="right:654.00px;top:341.35px;font-size:8.5px;color:#3a3a3a;">02011</div>
<div class="t tr" style="right:585.20px;top:341.35px;font-size:8.5px;color:#3a3a3a;">51,67</div>
<div class="t tr" style="right:281.20px;top:341.35px;font-size:8.5px;color:#3a3a3a;">27.434,58</div>
<div class="t" style="left:726.50px;top:341.35px;font-size:8.5px;color:#3a3a3a;">S</div>
<div class="t tr" style="right:213.20px;top:341.35px;font-size:8.5px;color:#3a3a3a;">12-2017/0004</div>
<div class="t tr" style="right:180.80px;top:341.35px;font-size:8.5px;color:#3a3a3a;">372</div>
<div class="t" style="left:822.50px;top:341.35px;font-size:8.5px;color:#3a3a3a;">RE</div>
<div class="r" style="left:5.80px;top:353.08px;width:849.70px;height:11.18px;background:#bfe38a"></div>
<div class="t" style="left:27.80px;top:352.53px;font-size:8.5px;color:#2c5a14;">31.12.2017</div>
<div class="t tr" style="right:863.80px;top:352.53px;font-size:8.5px;color:#2c5a14;">DIV.</div>
<div class="t" style="left:138.30px;top:352.53px;font-size:8.5px;color:#2c5a14;">S-Buchg., Anz. 3</div>
<div class="t tr" style="right:654.00px;top:352.53px;font-size:8.5px;color:#2c5a14;">02012</div>
<div class="t tr" style="right:585.20px;top:352.53px;font-size:8.5px;color:#2c5a14;">273,52</div>
<div class="t tr" style="right:515.30px;top:352.53px;font-size:8.5px;color:#2c5a14;">376,85</div>
<div class="t tr" style="right:281.20px;top:352.53px;font-size:8.5px;color:#2c5a14;">27.331,25</div>
<div class="t" style="left:726.50px;top:352.53px;font-size:8.5px;color:#2c5a14;">S</div>
<div class="t tr" style="right:213.20px;top:352.53px;font-size:8.5px;color:#2c5a14;">12-2017/0004</div>
<div class="r" style="left:5.80px;top:364.26px;width:849.70px;height:11.18px;background:#fbfbf9"></div>
<div class="r" style="left:282.50px;top:364.26px;width:63.50px;height:11.18px;background:linear-gradient(90deg,#ececea,#efefed 60%,#f3f3f1)"></div>
<div class="t" style="left:27.80px;top:363.71px;font-size:8.5px;color:#3a3a3a;">31.12.2017</div>
<div class="t tr" style="right:863.80px;top:363.71px;font-size:8.5px;color:#3a3a3a;">1759</div>
<div class="t tr" style="right:654.00px;top:363.71px;font-size:8.5px;color:#3a3a3a;">02911</div>
<div class="t tr" style="right:585.20px;top:363.71px;font-size:8.5px;color:#3a3a3a;">1.118,69</div>
<div class="t tr" style="right:281.20px;top:363.71px;font-size:8.5px;color:#3a3a3a;">28.449,94</div>
<div class="t" style="left:726.50px;top:363.71px;font-size:8.5px;color:#3a3a3a;">S</div>
<div class="t tr" style="right:213.20px;top:363.71px;font-size:8.5px;color:#3a3a3a;">12-2017/0004</div>
<div class="t tr" style="right:180.80px;top:363.71px;font-size:8.5px;color:#3a3a3a;">373</div>
<div class="t" style="left:822.50px;top:363.71px;font-size:8.5px;color:#3a3a3a;">RE</div>
<div class="r" style="left:5.80px;top:375.44px;width:849.70px;height:11.18px;background:#bfe38a"></div>
<div class="t" style="left:27.80px;top:374.89px;font-size:8.5px;color:#2c5a14;">31.12.2017</div>
<div class="t tr" style="right:863.80px;top:374.89px;font-size:8.5px;color:#2c5a14;">DIV.</div>
<div class="t" style="left:138.30px;top:374.89px;font-size:8.5px;color:#2c5a14;">S-Buchg., Anz. 3</div>
<div class="t tr" style="right:654.00px;top:374.89px;font-size:8.5px;color:#2c5a14;">02912</div>
<div class="t tr" style="right:585.20px;top:374.89px;font-size:8.5px;color:#2c5a14;">1.440,44</div>
<div class="t tr" style="right:515.30px;top:374.89px;font-size:8.5px;color:#2c5a14;">1.424,16</div>
<div class="t tr" style="right:281.20px;top:374.89px;font-size:8.5px;color:#2c5a14;">28.466,22</div>
<div class="t" style="left:726.50px;top:374.89px;font-size:8.5px;color:#2c5a14;">S</div>
<div class="t tr" style="right:213.20px;top:374.89px;font-size:8.5px;color:#2c5a14;">12-2017/0004</div>
<div class="r" style="left:5.80px;top:386.62px;width:849.70px;height:11.18px;background:#fbfbf9"></div>
<div class="r" style="left:282.50px;top:386.62px;width:63.50px;height:11.18px;background:linear-gradient(90deg,#ececea,#efefed 60%,#f3f3f1)"></div>
<div class="t" style="left:27.80px;top:386.07px;font-size:8.5px;color:#3a3a3a;">31.12.2017</div>
<div class="t tr" style="right:863.80px;top:386.07px;font-size:8.5px;color:#3a3a3a;">1759</div>
<div class="t tr" style="right:654.00px;top:386.07px;font-size:8.5px;color:#3a3a3a;">03311</div>
<div class="t tr" style="right:515.30px;top:386.07px;font-size:8.5px;color:#3a3a3a;">1.182,60</div>
<div class="t tr" style="right:281.20px;top:386.07px;font-size:8.5px;color:#3a3a3a;">27.283,62</div>
<div class="t" style="left:726.50px;top:386.07px;font-size:8.5px;color:#3a3a3a;">S</div>
<div class="t tr" style="right:213.20px;top:386.07px;font-size:8.5px;color:#3a3a3a;">12-2017/0004</div>
<div class="t tr" style="right:180.80px;top:386.07px;font-size:8.5px;color:#3a3a3a;">374</div>
<div class="t" style="left:822.50px;top:386.07px;font-size:8.5px;color:#3a3a3a;">RE</div>
<div class="r" style="left:5.80px;top:397.80px;width:849.70px;height:11.18px;background:#f2f2f0"></div>
<div class="r" style="left:282.50px;top:397.80px;width:63.50px;height:11.18px;background:linear-gradient(90deg,#ececea,#efefed 60%,#f3f3f1)"></div>
<div class="t" style="left:27.80px;top:397.25px;font-size:8.5px;color:#3a3a3a;">31.12.2017</div>
<div class="t tr" style="right:863.80px;top:397.25px;font-size:8.5px;color:#3a3a3a;">1759</div>
<div class="t tr" style="right:654.00px;top:397.25px;font-size:8.5px;color:#3a3a3a;">03811</div>
<div class="t tr" style="right:515.30px;top:397.25px;font-size:8.5px;color:#3a3a3a;">374,89</div>
<div class="t tr" style="right:281.20px;top:397.25px;font-size:8.5px;color:#3a3a3a;">26.908,73</div>
<div class="t" style="left:726.50px;top:397.25px;font-size:8.5px;color:#3a3a3a;">S</div>
<div class="t tr" style="right:213.20px;top:397.25px;font-size:8.5px;color:#3a3a3a;">12-2017/0004</div>
<div class="t tr" style="right:180.80px;top:397.25px;font-size:8.5px;color:#3a3a3a;">375</div>
<div class="t" style="left:822.50px;top:397.25px;font-size:8.5px;color:#3a3a3a;">RE</div>
<div class="r" style="left:5.80px;top:408.98px;width:849.70px;height:11.18px;background:#bfe38a"></div>
<div class="t" style="left:27.80px;top:408.43px;font-size:8.5px;color:#2c5a14;">31.12.2017</div>
<div class="t tr" style="right:863.80px;top:408.43px;font-size:8.5px;color:#2c5a14;">DIV.</div>
<div class="t" style="left:138.30px;top:408.43px;font-size:8.5px;color:#2c5a14;">S-Buchg., Anz. 3</div>
<div class="t tr" style="right:654.00px;top:408.43px;font-size:8.5px;color:#2c5a14;">03812</div>
<div class="t tr" style="right:585.20px;top:408.43px;font-size:8.5px;color:#2c5a14;">2.833,88</div>
<div class="t tr" style="right:515.30px;top:408.43px;font-size:8.5px;color:#2c5a14;">3.272,49</div>
<div class="t tr" style="right:281.20px;top:408.43px;font-size:8.5px;color:#2c5a14;">26.470,12</div>
<div class="t" style="left:726.50px;top:408.43px;font-size:8.5px;color:#2c5a14;">S</div>
<div class="t tr" style="right:213.20px;top:408.43px;font-size:8.5px;color:#2c5a14;">12-2017/0004</div>
<div class="r" style="left:5.80px;top:420.16px;width:849.70px;height:11.18px;background:#f2f2f0"></div>
<div class="r" style="left:282.50px;top:420.16px;width:63.50px;height:11.18px;background:linear-gradient(90deg,#ececea,#efefed 60%,#f3f3f1)"></div>
<div class="t" style="left:27.80px;top:419.61px;font-size:8.5px;color:#3a3a3a;">31.12.2017</div>
<div class="t tr" style="right:863.80px;top:419.61px;font-size:8.5px;color:#3a3a3a;">1759</div>
<div class="t tr" style="right:654.00px;top:419.61px;font-size:8.5px;color:#3a3a3a;">03911</div>
<div class="t tr" style="right:585.20px;top:419.61px;font-size:8.5px;color:#3a3a3a;">985,19</div>
<div class="t tr" style="right:281.20px;top:419.61px;font-size:8.5px;color:#3a3a3a;">27.455,31</div>
<div class="t" style="left:726.50px;top:419.61px;font-size:8.5px;color:#3a3a3a;">S</div>
<div class="t tr" style="right:213.20px;top:419.61px;font-size:8.5px;color:#3a3a3a;">12-2017/0004</div>
<div class="t tr" style="right:180.80px;top:419.61px;font-size:8.5px;color:#3a3a3a;">376</div>
<div class="t" style="left:822.50px;top:419.61px;font-size:8.5px;color:#3a3a3a;">RE</div>
<div class="r" style="left:5.80px;top:431.34px;width:849.70px;height:11.18px;background:#bfe38a"></div>
<div class="t" style="left:27.80px;top:430.79px;font-size:8.5px;color:#2c5a14;">31.12.2017</div>
<div class="t tr" style="right:863.80px;top:430.79px;font-size:8.5px;color:#2c5a14;">DIV.</div>
<div class="t" style="left:138.30px;top:430.79px;font-size:8.5px;color:#2c5a14;">S-Buchg., Anz. 3</div>
<div class="t tr" style="right:654.00px;top:430.79px;font-size:8.5px;color:#2c5a14;">03912</div>
<div class="t tr" style="right:585.20px;top:430.79px;font-size:8.5px;color:#2c5a14;">1.191,72</div>
<div class="t tr" style="right:515.30px;top:430.79px;font-size:8.5px;color:#2c5a14;">1.187,69</div>
<div class="t tr" style="right:281.20px;top:430.79px;font-size:8.5px;color:#2c5a14;">27.459,34</div>
<div class="t" style="left:726.50px;top:430.79px;font-size:8.5px;color:#2c5a14;">S</div>
<div class="t tr" style="right:213.20px;top:430.79px;font-size:8.5px;color:#2c5a14;">12-2017/0004</div>
<div class="r" style="left:5.80px;top:431.34px;width:849.70px;height:11.58px;border:1px solid #6a6a6a"></div>
<div class="r" style="left:5.80px;top:539.90px;width:849.70px;height:10.10px;background:linear-gradient(#e6e6e6,#f4f4f4 50%,#e9e9e9);border-top:1px solid #dcdcdc"></div>
<div class="r" style="left:17.00px;top:540.20px;width:633.00px;height:9.80px;background:linear-gradient(#f2f2f2,#dadada 45%,#c6c6c6);border:1px solid #b0b0b0;border-radius:2px"></div>
<svg class="r" style="left:331px;top:542.5px" width="6" height="5" viewBox="0 0 6 5"><path d="M0.5 0 V5 M2.5 0 V5 M4.5 0 V5" stroke="#777" stroke-width="0.9"/></svg>
<svg class="r" style="left:9px;top:542.7px" width="4" height="5" viewBox="0 0 4 5"><path d="M3.5 0 L0.5 2.5 L3.5 5Z" fill="#222"/></svg>
<svg class="r" style="left:848.5px;top:542.7px" width="4" height="5" viewBox="0 0 4 5"><path d="M0.5 0 L3.5 2.5 L0.5 5Z" fill="#222"/></svg>
<div class="t" style="left:23.00px;top:552.45px;font-size:8.5px;color:#333;transform:scaleX(0.76);">Anzahl:</div>
<div class="t" style="left:70.50px;top:552.45px;font-size:8.5px;color:#333;transform:scaleX(0.76);">15</div>
<div class="t" style="left:248.00px;top:552.45px;font-size:8.5px;color:#333;transform:scaleX(0.76);">Saldo:</div>
<div class="t tr" style="right:683.10px;top:552.45px;font-size:8.5px;color:#333;transform:scaleX(0.76);">326,79</div>
<div class="t" style="left:326.20px;top:552.45px;font-size:8.5px;color:#333;transform:scaleX(0.76);">S</div>
<div class="t" style="left:503.50px;top:552.25px;font-size:8.5px;color:#333;transform:scaleX(0.76);">Umsatz Soll:</div>
<div class="t tr" style="right:418.80px;top:552.25px;font-size:8.5px;color:#333;transform:scaleX(0.76);">57.438,32</div>
<div class="t" style="left:751.20px;top:552.25px;font-size:8.5px;color:#333;transform:scaleX(0.76);">Umsatz Haben:</div>
<div class="t tr" style="right:163.00px;top:552.25px;font-size:8.5px;color:#333;transform:scaleX(0.76);">57.111,53</div>
<div class="r" style="left:0.00px;top:577.00px;width:999.00px;height:15.00px;background:#f0efeb;border-top:1px solid #dedcd6"></div>
<div class="t" style="left:662.00px;top:578.91px;font-size:8.925px;color:#222;transform:scaleX(0.772);">Jahresabschluss zum 31.12.2017</div>
<svg class="r" style="left:805.5px;top:580.5px" width="9" height="9" viewBox="0 0 9 9"><circle cx="4.5" cy="4.5" r="4" fill="#d8dce4" stroke="#8a90a0" stroke-width="0.8"/><text x="4.6" y="7.6" font-size="8" text-anchor="middle" fill="#555" font-family="Liberation Sans">&#8364;</text></svg>
<div class="t" style="left:821.00px;top:578.89px;font-size:9.5625px;color:#222;transform:scaleX(0.72);">EUR</div>
<div class="t" style="left:840.80px;top:578.89px;font-size:9.5625px;color:#222;transform:scaleX(0.768);">L:\DATEV\DATEN\RWDAT\DATA\STANDARD</div>
<div class="r" style="left:856.00px;top:18.20px;width:5.00px;height:558.80px;background:linear-gradient(90deg,#efeeea,#f6f6f4 60%,#efeeea)"></div>
<div class="r" style="left:860.50px;top:18.20px;width:1.00px;height:558.80px;background:#e6e5e1"></div>
<div class="r" style="left:861.50px;top:18.20px;width:123.50px;height:558.80px;background:#f0efeb"></div>
<svg class="r" style="left:858px;top:286px" width="2" height="22" viewBox="0 0 2 22"><path d="M1 0 V22" stroke="#8a8a8a" stroke-width="1" stroke-dasharray="1 2"/></svg>
<div class="r" style="left:861.50px;top:18.20px;width:49.00px;height:11.40px;background:#f3f2ee;border-top:1px solid #dcdcdc"></div>
<div class="t" style="left:865.00px;top:18.65px;font-size:8.5px;color:#222;">Eigenschaften</div>
<div class="r" style="left:910.50px;top:18.60px;width:74.00px;height:11.00px;background:linear-gradient(#e4e4e4,#d6d6d6);border:1px solid #c4c4c4"></div>
<div class="t" style="left:914.00px;top:18.65px;font-size:8.5px;color:#222;transform:scaleX(0.786);">Kontextbezogene Lin...</div>
<div class="r" style="left:861.50px;top:29.60px;width:123.50px;height:13.60px;background:#f0efeb"></div>
<svg class="r" style="left:862.5px;top:31px" width="2" height="11" viewBox="0 0 2 11"><path d="M1 0 V11" stroke="#aaa" stroke-width="1" stroke-dasharray="1 1"/></svg>
<div class="t" style="left:868.70px;top:31.35px;font-size:8.5px;color:#333;">Eigenschaften</div>
<svg class="r" style="left:963.5px;top:33.5px" width="6" height="8" viewBox="0 0 6 8"><path d="M1.5 0.5 H4.5 V4 H5.5 V5 H3.5 V8 H2.5 V5 H0.5 V4 H1.5Z" fill="#666"/></svg>
<svg class="r" style="left:976px;top:35px" width="5" height="5" viewBox="0 0 5 5"><path d="M0.6 0.6 L4.4 4.4 M4.4 0.6 L0.6 4.4" stroke="#505050" stroke-width="1.2"/></svg>
<div class="r" style="left:861.50px;top:43.20px;width:123.50px;height:0.80px;background:#e4e3df"></div>
<svg class="r" style="left:867.5px;top:52.5px" width="8" height="7" viewBox="0 0 8 7"><path d="M0.6 2.3 H3.9 V0.7 L7.3 3.5 L3.9 6.3 V4.7 H0.6Z" fill="#8cae48" stroke="#6e8e36" stroke-width="0.9" stroke-linejoin="round"/></svg>
<div class="t" style="left:878.00px;top:49.13px;font-size:9.1375px;color:#3a8a1e;font-weight:bold;transform:scaleX(0.78);">Einstellungen</div>
<svg class="r" style="left:867.5px;top:63px" width="8" height="7" viewBox="0 0 8 7"><path d="M0.6 2.3 H3.9 V0.7 L7.3 3.5 L3.9 6.3 V4.7 H0.6Z" fill="#f4f4f4" stroke="#8a8a8a" stroke-width="0.9" stroke-linejoin="round"/></svg>
<div class="t" style="left:878.00px;top:59.85px;font-size:8.5px;color:#222;">Kontenumfang</div>
<svg class="r" style="left:867.5px;top:74px" width="8" height="7" viewBox="0 0 8 7"><path d="M0.6 2.3 H3.9 V0.7 L7.3 3.5 L3.9 6.3 V4.7 H0.6Z" fill="#f4f4f4" stroke="#8a8a8a" stroke-width="0.9" stroke-linejoin="round"/></svg>
<div class="t" style="left:878.00px;top:71.05px;font-size:8.5px;color:#222;">Druckeinstellungen</div>
<div class="r" style="left:865.00px;top:101.30px;width:120.00px;height:12.50px;background:#cdcdcd"></div>
<svg class="r" style="left:869.5px;top:103.05px" width="9" height="9" viewBox="0 0 9 9"><circle cx="4.5" cy="4.5" r="4" fill="#fafafa" stroke="#bbb" stroke-width="0.5"/><path d="M2.6 5.4 L4.5 3.4 L6.4 5.4" fill="none" stroke="#444" stroke-width="0.9"/></svg>
<div class="t" style="left:884.70px;top:101.38px;font-size:9.1375px;color:#111;font-weight:bold;transform:scaleX(0.78);">Zeitraum</div>
<div class="r" style="left:865.00px;top:113.80px;width:120.00px;height:51.40px;background:#fefefe;border-bottom:1px solid #e2e2e0"></div>
<svg class="r" style="left:871.00px;top:120.40px" width="9" height="9" viewBox="0 0 9 9"><circle cx="4.5" cy="4.5" r="3.8" fill="#e6e6e6" stroke="#a8a8a8" stroke-width="0.8"/><circle cx="4.3" cy="4.3" r="2.2" fill="#f4f4f4"/></svg>
<div class="t" style="left:883.90px;top:118.25px;font-size:8.5px;color:#222;">Jahr</div>
<svg class="r" style="left:871.00px;top:134.00px" width="9" height="9" viewBox="0 0 9 9"><circle cx="4.5" cy="4.5" r="3.8" fill="#cddbe6" stroke="#8a9aa8" stroke-width="0.8"/><circle cx="4.5" cy="4.5" r="1.9" fill="#1e3248"/></svg>
<div class="t" style="left:883.90px;top:133.15px;font-size:8.5px;color:#222;">Monat</div>
<svg class="r" style="left:871.00px;top:148.50px" width="9" height="9" viewBox="0 0 9 9"><circle cx="4.5" cy="4.5" r="3.8" fill="#e6e6e6" stroke="#a8a8a8" stroke-width="0.8"/><circle cx="4.3" cy="4.3" r="2.2" fill="#f4f4f4"/></svg>
<div class="t" style="left:883.90px;top:146.95px;font-size:8.5px;color:#222;">Monatsbereich</div>
<div class="r" style="left:865.00px;top:170.60px;width:120.00px;height:12.50px;background:#cdcdcd"></div>
<svg class="r" style="left:869.5px;top:172.35px" width="9" height="9" viewBox="0 0 9 9"><circle cx="4.5" cy="4.5" r="4" fill="#fafafa" stroke="#bbb" stroke-width="0.5"/><path d="M2.6 5.4 L4.5 3.4 L6.4 5.4" fill="none" stroke="#444" stroke-width="0.9"/></svg>
<div class="t" style="left:884.70px;top:170.68px;font-size:9.1375px;color:#111;font-weight:bold;transform:scaleX(0.78);">Umfang und Varianten</div>
<div class="r" style="left:865.00px;top:183.10px;width:120.00px;height:203.90px;background:#fefefe;border-bottom:1px solid #e2e2e0"></div>
<div class="r" style="left:870.00px;top:195.50px;width:4.00px;height:1.00px;background:#cfcfcf"></div>
<div class="r" style="left:932.00px;top:195.50px;width:53.00px;height:1.00px;background:#cfcfcf"></div>
<div class="t" style="left:875.50px;top:190.45px;font-size:8.5px;color:#5e8246;">Stornobuchungen</div>
<div class="r" style="left:877px;top:206.8px;width:8.6px;height:8.6px;background:linear-gradient(135deg,#d6d8da,#f4f5f6);border:1px solid #a4a6a8"></div>
<div class="t" style="left:889.20px;top:200.65px;font-size:8.5px;color:#222;">stornierte Buchungen</div>
<div class="t" style="left:889.20px;top:208.65px;font-size:8.5px;color:#222;">ausblenden</div>
<div class="r" style="left:870.00px;top:230.50px;width:4.00px;height:1.00px;background:#cfcfcf"></div>
<div class="r" style="left:908.00px;top:230.50px;width:77.00px;height:1.00px;background:#cfcfcf"></div>
<div class="t" style="left:875.50px;top:225.45px;font-size:8.5px;color:#5e8246;">Sortierung</div>
<div class="t" style="left:878.60px;top:237.25px;font-size:8.5px;color:#222;">Sortieren nach:</div>
<div class="r" style="left:877.00px;top:250.30px;width:91.30px;height:13.30px;background:#fff;border:1px solid #cfcfcf"></div>
<div class="t" style="left:879.50px;top:250.90px;font-size:8.5px;color:#222;">Belegfeld1</div>
<svg class="r" style="left:959.30px;top:255.45px" width="6" height="4" viewBox="0 0 6 4"><path d="M0.5 0.5 L5.5 0.5 L3 3.5Z" fill="#111"/></svg>
<div class="r" style="left:877px;top:273px;width:8.6px;height:8.6px;background:linear-gradient(135deg,#d2d9e2,#f2f4f8);border:1px solid #a4a6a8"><svg style="position:absolute;left:0.5px;top:0.5px" width="5.6" height="5.6" viewBox="0 0 7 7"><path d="M1.6 3.8 L3.0 5.5 L5.6 1.3" fill="none" stroke="#2a3850" stroke-width="1.2"/></svg></div>
<div class="t" style="left:889.70px;top:267.15px;font-size:8.5px;color:#222;">Nach diesem Feld</div>
<div class="t" style="left:889.70px;top:275.35px;font-size:8.5px;color:#222;">zusammenfassen</div>
<div class="r" style="left:870.00px;top:294.50px;width:4.00px;height:1.00px;background:#cfcfcf"></div>
<div class="r" style="left:905.00px;top:294.50px;width:80.00px;height:1.00px;background:#cfcfcf"></div>
<div class="t" style="left:875.50px;top:289.45px;font-size:8.5px;color:#5e8246;">Saldierung</div>
<div class="r" style="left:877px;top:307.8px;width:8.6px;height:8.6px;background:linear-gradient(135deg,#d2d9e2,#f2f4f8);border:1px solid #a4a6a8"><svg style="position:absolute;left:0.5px;top:0.5px" width="5.6" height="5.6" viewBox="0 0 7 7"><path d="M1.6 3.8 L3.0 5.5 L5.6 1.3" fill="none" stroke="#2a3850" stroke-width="1.2"/></svg></div>
<div class="t" style="left:889.70px;top:302.65px;font-size:8.5px;color:#222;">Emittlung / Anzeige</div>
<div class="t" style="left:889.70px;top:311.05px;font-size:8.5px;color:#222;">fortlaufender Saldo</div>
<div class="r" style="left:886.3px;top:322.3px;width:8px;height:8px;background:linear-gradient(135deg,#d6d8da,#f4f5f6);border:1px solid #a4a6a8"></div>
<div class="t" style="left:898.30px;top:320.65px;font-size:8.5px;color:#222;transform:scaleX(0.745);">Startwert: Saldo vom Zeitraumb</div>
<div class="r" style="left:877px;top:345px;width:8.6px;height:8.6px;background:linear-gradient(135deg,#d6d8da,#f4f5f6);border:1px solid #a4a6a8"></div>
<div class="t" style="left:889.70px;top:339.45px;font-size:8.5px;color:#222;">Emittlung / Anzeige</div>
<div class="t" style="left:889.70px;top:347.85px;font-size:8.5px;color:#222;">Gruppensaldo</div>
<div class="r" style="left:886.3px;top:359.5px;width:8px;height:8px;background:#fafafa;border:1px solid #cdcdcd"></div>
<div class="t" style="left:898.30px;top:358.05px;font-size:8.5px;color:#8a8a8a;">Nullsalden ausblenden</div>
<div class="r" style="left:861.50px;top:568.00px;width:123.50px;height:9.00px;background:#f0efeb"></div>
<div class="r" style="left:872.70px;top:567.90px;width:91.60px;height:8.90px;background:linear-gradient(#f4f4f4,#d8d8d8 50%,#c8c8c8);border:1px solid #aaa;border-radius:2px"></div>
<svg class="r" style="left:915px;top:570.5px" width="6" height="4" viewBox="0 0 6 4"><path d="M0.5 0 V4 M2.5 0 V4 M4.5 0 V4" stroke="#777" stroke-width="0.9"/></svg>
<svg class="r" style="left:864.5px;top:570.3px" width="3" height="5" viewBox="0 0 3 5"><path d="M3 0 L0 2.5 L3 5Z" fill="#333"/></svg>
<svg class="r" style="left:979.5px;top:570.3px" width="3" height="5" viewBox="0 0 3 5"><path d="M0 0 L3 2.5 L0 5Z" fill="#333"/></svg>
<div class="r" style="left:985.00px;top:18.20px;width:14.00px;height:558.80px;background:#f0efeb"></div>
<div class="r" style="left:986.80px;top:24.30px;width:12.20px;height:63.20px;background:#fbfbfa;border:1px solid #cfcfcf;border-right:none;border-radius:3px 0 0 3px"></div>
<div class="r" style="left:990px;top:28.7px;width:10px;height:56px"><div style="position:absolute;left:0;top:0;transform-origin:0 0;transform:translate(10px,0) rotate(90deg) scaleX(0.83);font-size:8px;line-height:10px;white-space:nowrap;color:#222;will-change:transform;-webkit-text-stroke:0.2px #222">Ausgabesteuerung</div></div>
<div class="r" style="left:986.80px;top:88.40px;width:12.20px;height:29.60px;background:#e9e8e4;border:1px solid #cfcfcf;border-right:none;border-radius:3px 0 0 3px"></div>
<svg class="r" style="left:988.5px;top:89.5px" width="11" height="11" viewBox="0 0 11 11"><circle cx="5.5" cy="5.5" r="5" fill="#78b040" stroke="#4e7e28" stroke-width="0.7"/><text x="5.5" y="8.6" font-size="8.5" font-weight="bold" text-anchor="middle" fill="#fff" font-family="Liberation Sans">?</text></svg>
<div class="r" style="left:990px;top:103px;width:10px;height:14px"><div style="position:absolute;left:0;top:0;transform-origin:0 0;transform:translate(10px,0) rotate(90deg) scaleX(0.83);font-size:8px;line-height:10px;white-space:nowrap;color:#222;will-change:transform;-webkit-text-stroke:0.2px #222">Hilfe</div></div>
<svg class="r" style="left:0;top:0" width="999" height="592" viewBox="0 0 999 592"><line x1="869.8" y1="273.8" x2="366.1" y2="138.5" stroke="#e8101a" stroke-width="3.0" stroke-linecap="round"/><path d="M355.0 135.5 L369.7 132.7 L366.4 145.3Z" fill="#ee0a14" stroke="#e8101a" stroke-width="1" stroke-linejoin="round"/><line x1="876.0" y1="326.0" x2="351.6" y2="547.5" stroke="#e8101a" stroke-width="3.0" stroke-linecap="round"/><path d="M341.0 552.0 L350.9 540.8 L356.0 552.7Z" fill="#ee0a14" stroke="#e8101a" stroke-width="1" stroke-linejoin="round"/><line x1="947.0" y1="144.0" x2="930.5" y2="230.4" stroke="#e8101a" stroke-width="3.0" stroke-linecap="round"/><path d="M928.3 241.7 L924.5 227.2 L937.2 229.7Z" fill="#ee0a14" stroke="#e8101a" stroke-width="1" stroke-linejoin="round"/><line x1="991.5" y1="292.5" x2="956.8" y2="279.9" stroke="#e8101a" stroke-width="3.0" stroke-linecap="round"/><path d="M946.0 276.0 L960.9 274.5 L956.5 286.7Z" fill="#ee0a14" stroke="#e8101a" stroke-width="1" stroke-linejoin="round"/><line x1="973.0" y1="357.5" x2="946.5" y2="329.8" stroke="#e8101a" stroke-width="3.0" stroke-linecap="round"/><path d="M938.5 321.5 L952.5 326.7 L943.1 335.7Z" fill="#ee0a14" stroke="#e8101a" stroke-width="1" stroke-linejoin="round"/></svg>
</div></body></html>
